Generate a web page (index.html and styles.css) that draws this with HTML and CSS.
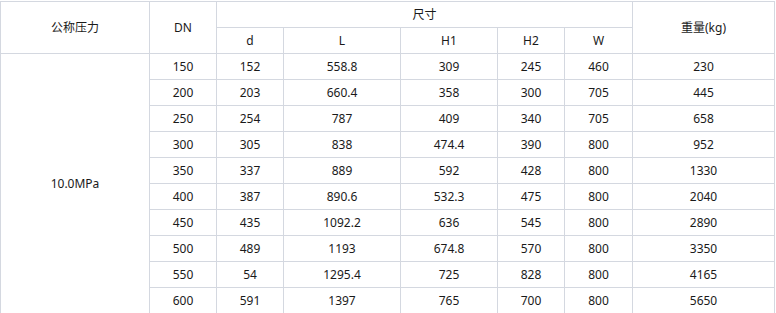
FILE: index.html
```html
<!DOCTYPE html>
<html lang="zh">
<head>
<meta charset="utf-8">
<link rel="stylesheet" href="styles.css">
</head>
<body>
<table class="spec">
  <colgroup>
    <col class="c1"><col class="c2"><col class="c3"><col class="c4"><col class="c5"><col class="c6"><col class="c7"><col class="c8">
  </colgroup>
  <thead>
    <tr>
      <th rowspan="2">公称压力</th>
      <th rowspan="2">DN</th>
      <th colspan="5">尺寸</th>
      <th rowspan="2">重量(kg)</th>
    </tr>
    <tr>
      <th>d</th><th>L</th><th>H1</th><th>H2</th><th>W</th>
    </tr>
  </thead>
  <tbody>
    <tr><td rowspan="10">10.0MPa</td><td>150</td><td>152</td><td>558.8</td><td>309</td><td>245</td><td>460</td><td>230</td></tr>
    <tr><td>200</td><td>203</td><td>660.4</td><td>358</td><td>300</td><td>705</td><td>445</td></tr>
    <tr><td>250</td><td>254</td><td>787</td><td>409</td><td>340</td><td>705</td><td>658</td></tr>
    <tr><td>300</td><td>305</td><td>838</td><td>474.4</td><td>390</td><td>800</td><td>952</td></tr>
    <tr><td>350</td><td>337</td><td>889</td><td>592</td><td>428</td><td>800</td><td>1330</td></tr>
    <tr><td>400</td><td>387</td><td>890.6</td><td>532.3</td><td>475</td><td>800</td><td>2040</td></tr>
    <tr><td>450</td><td>435</td><td>1092.2</td><td>636</td><td>545</td><td>800</td><td>2890</td></tr>
    <tr><td>500</td><td>489</td><td>1193</td><td>674.8</td><td>570</td><td>800</td><td>3350</td></tr>
    <tr><td>550</td><td>54</td><td>1295.4</td><td>725</td><td>828</td><td>800</td><td>4165</td></tr>
    <tr><td>600</td><td>591</td><td>1397</td><td>765</td><td>700</td><td>800</td><td>5650</td></tr>
  </tbody>
</table>
</body>
</html>
```

FILE: styles.css
```css
html, body {
  margin: 0;
  padding: 0;
  background: #fff;
}
body {
  padding-top: 1px;
}
.spec {
  border-collapse: collapse;
  table-layout: fixed;
  width: 774px;
  font-family: "Noto Sans", "Noto Sans CJK SC", sans-serif;
  font-size: 12px;
  color: #1a1a1a;
}
.c1 { width: 149px; }
.c2 { width: 67px; }
.c3 { width: 67px; }
.c4 { width: 117px; }
.c5 { width: 97px; }
.c6 { width: 67px; }
.c7 { width: 68px; }
.c8 { width: 142px; }
.spec th, .spec td {
  border: 1px solid #d4d8e0;
  height: 25px;
  padding: 0;
  text-align: center;
  vertical-align: middle;
  font-weight: normal;
  line-height: 16px;
}
```
